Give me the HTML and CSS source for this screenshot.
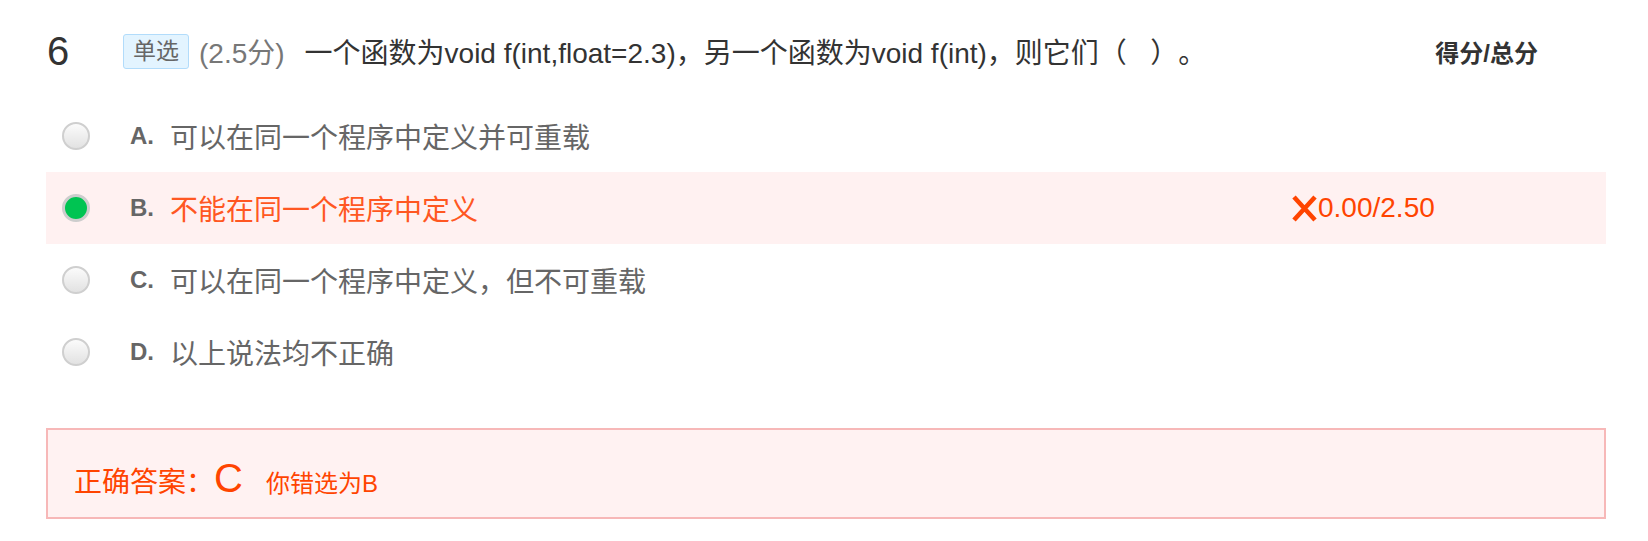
FILE: index.html
```html
<!DOCTYPE html>
<html lang="zh-CN">
<head>
<meta charset="utf-8">
<title>单选题</title>
<link rel="stylesheet" href="styles.css">
</head>
<body>
<div class="question">
  <div class="q-head">
    <span class="q-num">6</span>
    <span class="q-tag">单选</span>
    <span class="q-pts">(2.5分)</span>
    <span class="q-title">一个函数为void f(int,float=2.3)，另一个函数为void f(int)，则它们（&nbsp;&nbsp;&nbsp;）。</span>
    <span class="score-head">得分/总分</span>
  </div>
  <ul class="options">
    <li class="option">
      <span class="radio"></span>
      <span class="opt-letter">A.</span>
      <span class="opt-text">可以在同一个程序中定义并可重载</span>
    </li>
    <li class="option wrong">
      <span class="radio checked"></span>
      <span class="opt-letter">B.</span>
      <span class="opt-text">不能在同一个程序中定义</span>
      <span class="opt-score">
        <svg class="x-icon" width="25" height="27" viewBox="0 0 25 27"><path d="M2 2 L23 25 M23 2 L2 25" stroke="#ff4400" stroke-width="4.6" fill="none"/></svg>
        <span>0.00/2.50</span>
      </span>
    </li>
    <li class="option">
      <span class="radio"></span>
      <span class="opt-letter">C.</span>
      <span class="opt-text">可以在同一个程序中定义，但不可重载</span>
    </li>
    <li class="option">
      <span class="radio"></span>
      <span class="opt-letter">D.</span>
      <span class="opt-text">以上说法均不正确</span>
    </li>
  </ul>
  <div class="answer">
    <div class="answer-line">
      <span class="ans-label">正确答案：</span>
      <span class="ans-key">C</span>
      <span class="ans-yours">你错选为B</span>
    </div>
  </div>
</div>
</body>
</html>
```

FILE: styles.css
```css
body {
  margin: 0;
  background: #ffffff;
  font-family: "Liberation Sans", "Noto Sans CJK SC", sans-serif;
  text-spacing-trim: space-all;
}

.question {
  padding: 15px 42px 0 46px;
}

.q-head {
  display: flex;
  align-items: center;
  height: 72px;
}

.q-num {
  width: 77px;
  padding-left: 1px;
  box-sizing: border-box;
  font-size: 40px;
  color: #333333;
}

.q-tag {
  height: 35px;
  box-sizing: border-box;
  padding: 0 9px;
  line-height: 33px;
  font-size: 23px;
  color: #666666;
  background: #e3f4ff;
  border: 1px solid #b2dcfb;
  border-radius: 3px;
}

.q-pts {
  margin-left: 10px;
  font-size: 28px;
  color: #777777;
}

.q-title {
  margin-left: 20px;
  font-size: 28px;
  color: #333333;
}

.score-head {
  margin-left: auto;
  margin-right: 68px;
  font-size: 24px;
  font-weight: bold;
  color: #333333;
}

.options {
  list-style: none;
  margin: 13px 0 0;
  padding: 0;
}

.option {
  display: flex;
  align-items: center;
  height: 72px;
  padding-left: 16px;
}

.option.wrong {
  background: #fff1f1;
}

.radio {
  width: 28px;
  height: 28px;
  box-sizing: border-box;
  border-radius: 50%;
  border: 2px solid #cfcfcf;
  background: linear-gradient(#fbfbfb, #e2e2e2);
}

.radio.checked {
  border: 3px solid #cdcdcd;
  background: #00c452;
}

.opt-letter {
  width: 40px;
  margin-left: 40px;
  font-size: 24px;
  font-weight: bold;
  color: #666666;
}

.opt-text {
  font-size: 28px;
  color: #666666;
}

.option.wrong .opt-text {
  color: #ff5722;
}

.opt-score {
  margin-left: auto;
  width: 314px;
  display: flex;
  align-items: center;
  font-size: 28px;
  color: #ff4400;
}

.x-icon {
  display: block;
  margin-right: 1px;
}

.answer {
  margin-top: 40px;
  height: 91px;
  box-sizing: border-box;
  border: 2px solid #f7b8b8;
  background: #fff2f2;
  display: flex;
  align-items: center;
  padding: 10px 26px 0;
}

.answer-line {
  display: flex;
  align-items: baseline;
  color: #ff4400;
}

.ans-label {
  font-size: 28px;
}

.ans-key {
  font-size: 40px;
}

.ans-yours {
  margin-left: 23px;
  font-size: 24px;
}
```
